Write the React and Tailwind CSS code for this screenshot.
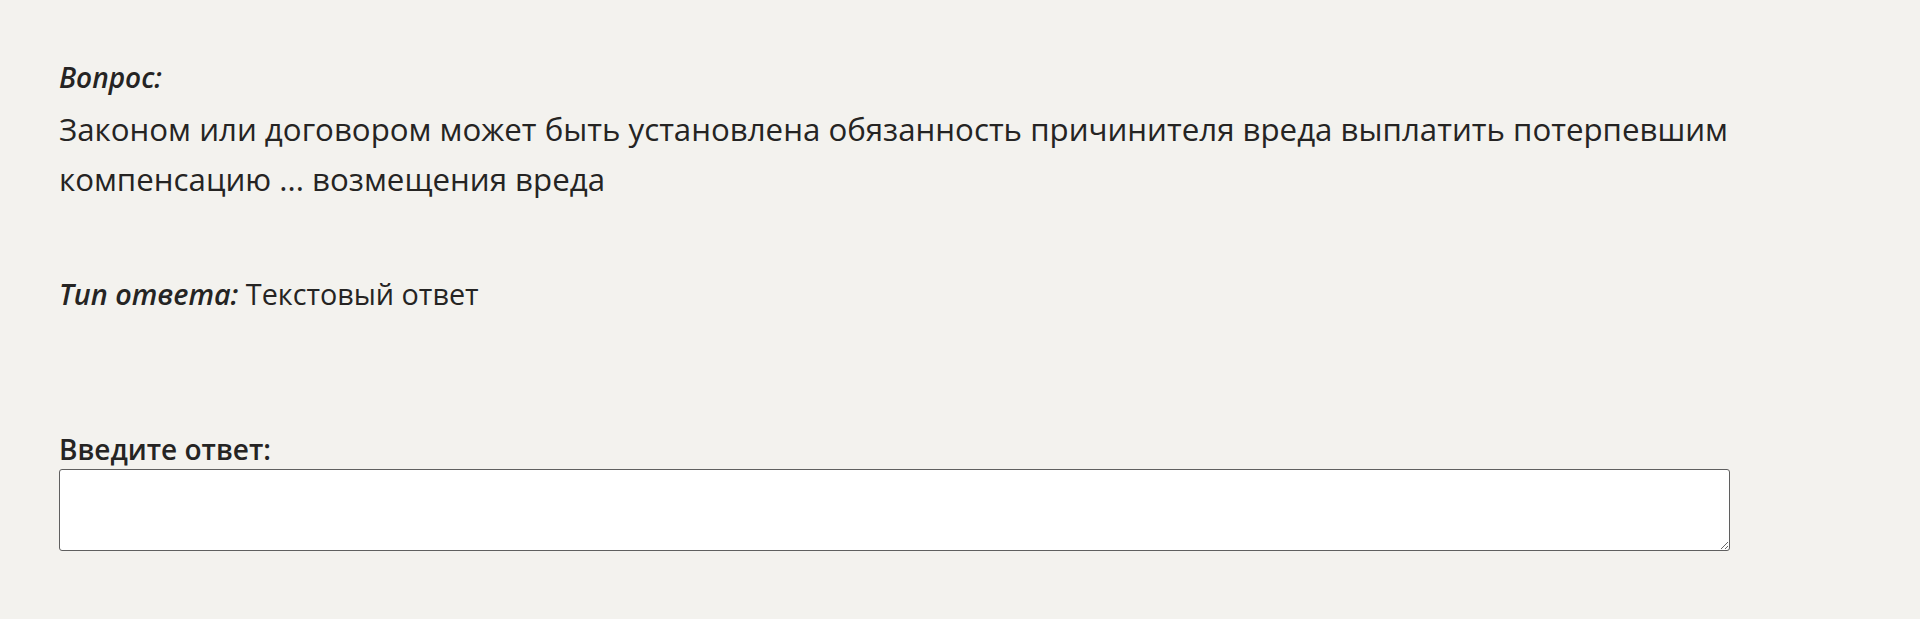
export default function App() {
  return (
    <div className="min-h-screen bg-[#f3f2ee] px-[59px] pt-[57px] font-['Open_Sans',sans-serif] text-[#252423]">
      <div className="w-[1671px]">
        <p className="text-[28px] leading-[40px] font-semibold italic">Вопрос:</p>
        <p className="mt-[7px] text-[31.25px] leading-[50px]">
          Законом или договором может быть установлена обязанность причинителя вреда выплатить потерпевшим
          компенсацию ... возмещения вреда
        </p>

        <p className="mt-[70px] text-[28.75px] leading-[40px]">
          <span className="font-semibold italic">Тип ответа:</span> Текстовый ответ
        </p>

        <div className="mt-[115px]">
          <label className="block text-[28px] leading-[40px] font-semibold">Введите ответ:</label>
          <textarea className="block h-[82px] w-full rounded-[3px] border border-[#5f5f5f] bg-white px-3 py-2 text-[28px] outline-none" />
        </div>
      </div>
    </div>
  );
}
